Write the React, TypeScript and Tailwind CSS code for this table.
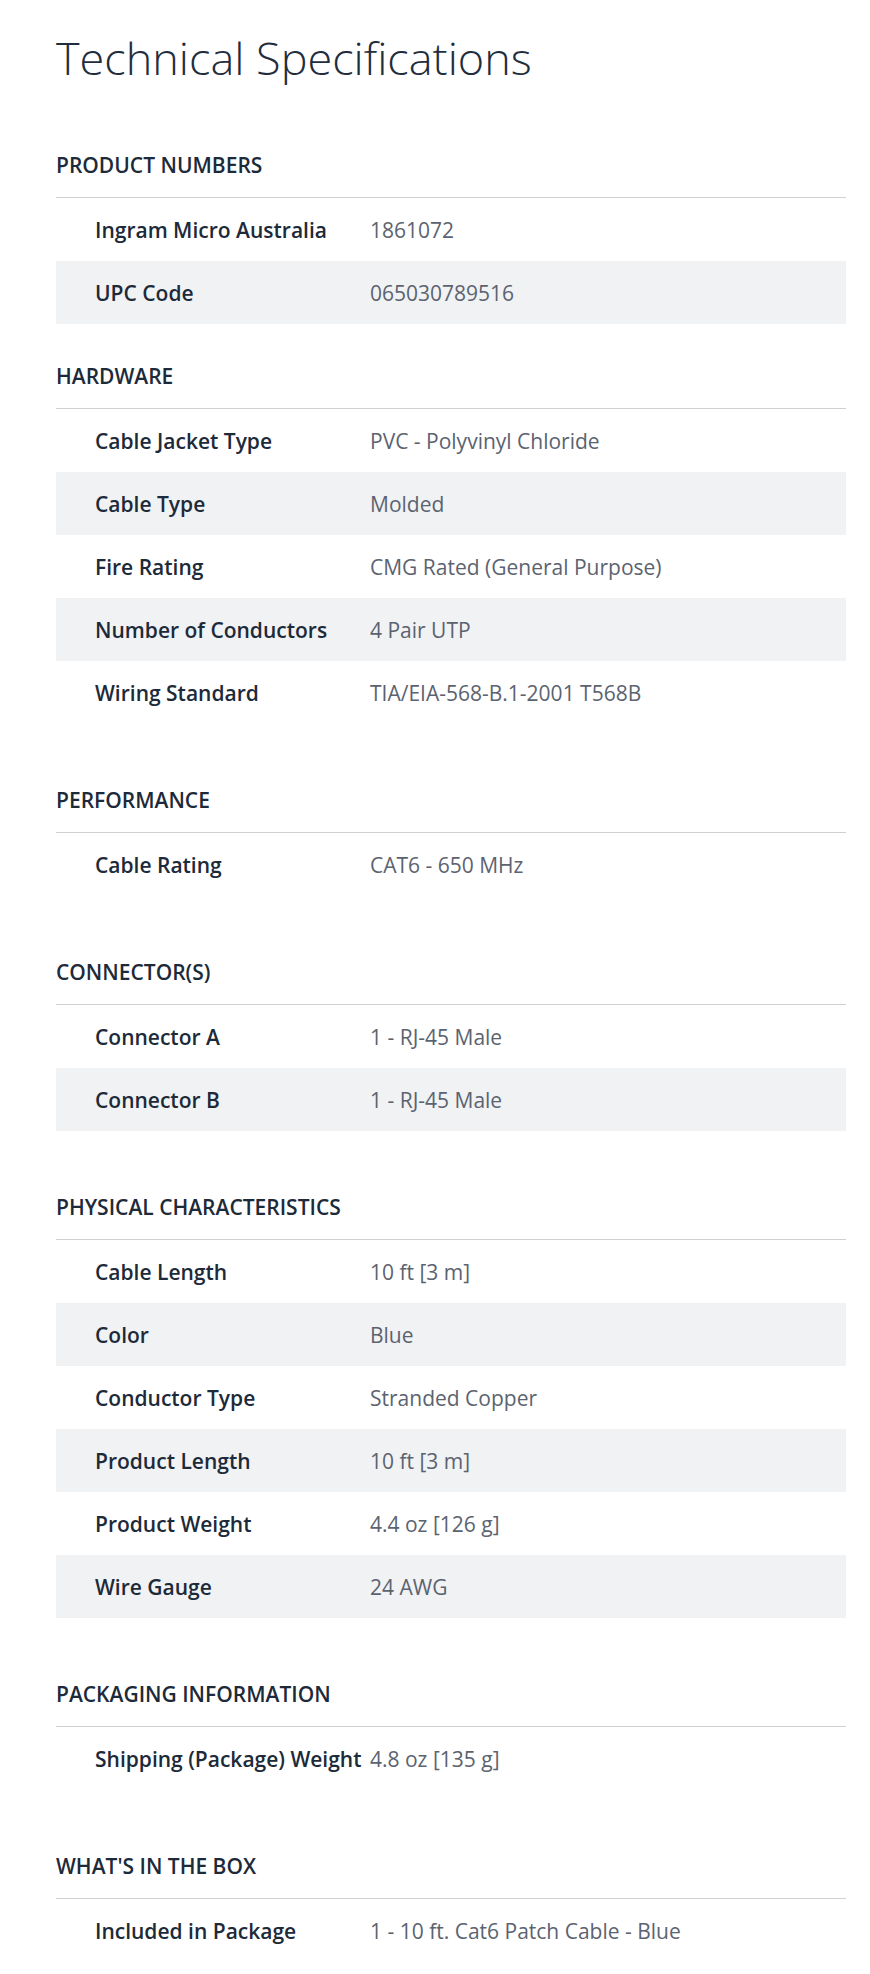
const sections: { title: string; rows: [string, string][]; gap: string }[] = [
  {
    title: 'PRODUCT NUMBERS',
    gap: 'mt-[66px]',
    rows: [
      ['Ingram Micro Australia', '1861072'],
      ['UPC Code', '065030789516'],
    ],
  },
  {
    title: 'HARDWARE',
    gap: 'mt-[37px]',
    rows: [
      ['Cable Jacket Type', 'PVC - Polyvinyl Chloride'],
      ['Cable Type', 'Molded'],
      ['Fire Rating', 'CMG Rated (General Purpose)'],
      ['Number of Conductors', '4 Pair UTP'],
      ['Wiring Standard', 'TIA/EIA-568-B.1-2001 T568B'],
    ],
  },
  {
    title: 'PERFORMANCE',
    gap: 'mt-[61px]',
    rows: [['Cable Rating', 'CAT6 - 650 MHz']],
  },
  {
    title: 'CONNECTOR(S)',
    gap: 'mt-[61px]',
    rows: [
      ['Connector A', '1 - RJ-45 Male'],
      ['Connector B', '1 - RJ-45 Male'],
    ],
  },
  {
    title: 'PHYSICAL CHARACTERISTICS',
    gap: 'mt-[61px]',
    rows: [
      ['Cable Length', '10 ft [3 m]'],
      ['Color', 'Blue'],
      ['Conductor Type', 'Stranded Copper'],
      ['Product Length', '10 ft [3 m]'],
      ['Product Weight', '4.4 oz [126 g]'],
      ['Wire Gauge', '24 AWG'],
    ],
  },
  {
    title: 'PACKAGING INFORMATION',
    gap: 'mt-[61px]',
    rows: [['Shipping (Package) Weight', '4.8 oz [135 g]']],
  },
  {
    title: "WHAT'S IN THE BOX",
    gap: 'mt-[61px]',
    rows: [['Included in Package', '1 - 10 ft. Cat6 Patch Cable - Blue']],
  },
]

const SpecRow = ({ label, value, shaded }: { label: string; value: string; shaded: boolean }) => (
  <div className={`grid h-[63px] grid-cols-[275px_1fr] items-center pl-[39px] ${shaded ? 'bg-[#f1f2f4]' : ''}`}>
    <span className="text-[21px] font-semibold leading-[30px] text-[#1d2a39] whitespace-nowrap">{label}</span>
    <span className="text-[21px] leading-[30px] text-[#5b6370]">{value}</span>
  </div>
)

export default function App() {
  return (
    <div className="min-h-[1974px] bg-white pl-[56px] pr-[24px] pt-[31px] pb-[12px] font-['Open_Sans',sans-serif]">
      <h1 className="text-[45px] font-light leading-[53px] text-[#1f2d3d]">Technical Specifications</h1>

      {sections.map((s) => (
        <section key={s.title} className={s.gap}>
          <h2 className="border-b border-[#cfd0d2] pb-[17px] text-[21px] font-semibold leading-[30px] text-[#1d2a39]">
            {s.title}
          </h2>
          <div>
            {s.rows.map(([label, value], i) => (
              <SpecRow key={label} label={label} value={value} shaded={i % 2 === 1} />
            ))}
          </div>
        </section>
      ))}
    </div>
  )
}
